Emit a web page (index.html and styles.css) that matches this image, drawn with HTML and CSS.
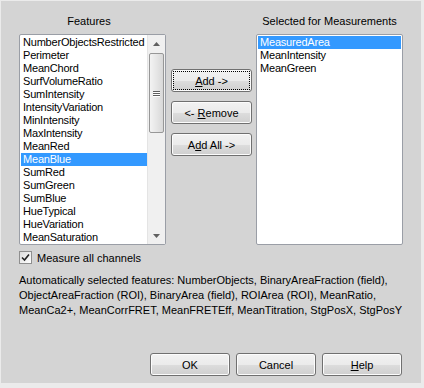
FILE: index.html
```html
<!DOCTYPE html>
<html lang="en">
<head>
    <meta charset="UTF-8">
    <title>Select Features</title>
    <link rel="stylesheet" href="styles.css">
</head>
<body>
    <div class="dialog">
        <div class="lists">
            <div class="column">
                <div class="caption caption-left">Features</div>
                <div class="listbox">
                    <ul class="items">
                        <li>NumberObjectsRestricted</li>
                        <li>Perimeter</li>
                        <li>MeanChord</li>
                        <li>SurfVolumeRatio</li>
                        <li>SumIntensity</li>
                        <li>IntensityVariation</li>
                        <li>MinIntensity</li>
                        <li>MaxIntensity</li>
                        <li>MeanRed</li>
                        <li class="selected">MeanBlue</li>
                        <li>SumRed</li>
                        <li>SumGreen</li>
                        <li>SumBlue</li>
                        <li>HueTypical</li>
                        <li>HueVariation</li>
                        <li>MeanSaturation</li>
                    </ul>
                    <div class="scrollbar">
                        <div class="arrow">
                            <svg width="7" height="4" viewBox="0 0 7 4"><path d="M0 4 L3.5 0 L7 4 Z" fill="#606060"/></svg>
                        </div>
                        <div class="track">
                            <div class="thumb">
                                <span class="grip"></span>
                                <span class="grip"></span>
                                <span class="grip"></span>
                            </div>
                        </div>
                        <div class="arrow">
                            <svg width="7" height="4" viewBox="0 0 7 4"><path d="M0 0 L3.5 4 L7 0 Z" fill="#606060"/></svg>
                        </div>
                    </div>
                </div>
            </div>

            <div class="actions">
                <button class="btn focused"><span><u>A</u>dd -&gt;</span></button>
                <button class="btn"><span>&lt;- <u>R</u>emove</span></button>
                <button class="btn"><span>A<u>d</u>d All -&gt;</span></button>
            </div>

            <div class="column">
                <div class="caption">Selected for Measurements</div>
                <div class="listbox">
                    <ul class="items">
                        <li class="selected">MeasuredArea</li>
                        <li>MeanIntensity</li>
                        <li>MeanGreen</li>
                    </ul>
                </div>
            </div>
        </div>

        <label class="check">
            <span class="box">
                <svg width="9" height="9" viewBox="0 0 9 9"><path d="M1 4.5 L3.5 7 L8 1.5" fill="none" stroke="#222" stroke-width="1.6"/></svg>
            </span>
            Measure all channels
        </label>

        <p class="auto">Automatically selected features: NumberObjects, BinaryAreaFraction (field),<br>ObjectAreaFraction (ROI), BinaryArea (field), ROIArea (ROI), MeanRatio,<br>MeanCa2+, MeanCorrFRET, MeanFRETEff, MeanTitration, StgPosX, StgPosY</p>

        <div class="footer">
            <button class="btn">OK</button>
            <button class="btn">Cancel</button>
            <button class="btn"><span><u>H</u>elp</span></button>
        </div>
    </div>
</body>
</html>
```

FILE: styles.css
```css
html, body {
    margin: 0;
    height: 100%;
}
body {
    background-color: #ebebeb;
    font-family: "Liberation Sans", Arial, sans-serif;
    font-size: 11px;
    color: #000;
}
.dialog {
    box-sizing: border-box;
    width: 420px;
    height: 382px;
    margin: 1px 0 0 1px;
    padding: 14px 0 0 18px;
    background-color: #d4d4d4;
    display: flex;
    flex-direction: column;
}
.lists {
    display: flex;
    align-items: flex-start;
}
.column {
    display: flex;
    flex-direction: column;
    width: 147px;
}
.caption {
    height: 13px;
    line-height: 13px;
    margin-bottom: 6px;
    text-align: center;
}
.caption-left {
    padding-right: 7px;
}
.listbox {
    box-sizing: border-box;
    height: 211px;
    border: 1px solid #9a9ea6;
    border-radius: 2px;
    background-color: #fff;
    padding: 1px;
    display: flex;
}
.items {
    list-style: none;
    margin: 0;
    padding: 0;
    flex: 1;
    overflow: hidden;
}
.items li {
    height: 13px;
    line-height: 13px;
    padding-left: 2px;
    white-space: nowrap;
    letter-spacing: -0.2px;
}
.items li.selected {
    background-color: #3399ff;
    color: #fff;
}
.scrollbar {
    width: 17px;
    margin: -1px -1px -1px 0;
    background-color: #f0f0f0;
    border-left: 1px solid #e4e4e4;
    display: flex;
    flex-direction: column;
}
.arrow {
    height: 17px;
    display: flex;
    align-items: center;
    justify-content: center;
}
.track {
    flex: 1;
    padding-top: 1px;
}
.thumb {
    box-sizing: border-box;
    height: 80px;
    margin: 0 1px;
    border: 1px solid #979797;
    border-radius: 2px;
    background: linear-gradient(to right, #f3f3f3, #e6e6e6 50%, #d8d8d8);
    display: flex;
    flex-direction: column;
    justify-content: center;
    align-items: center;
    gap: 1px;
}
.grip {
    width: 7px;
    height: 1px;
    background-color: #5e5e5e;
    box-shadow: 0 1px 0 #fff;
}
.actions {
    display: flex;
    flex-direction: column;
    gap: 9px;
    margin: 54px 4px 0 5px;
}
.btn {
    box-sizing: border-box;
    width: 81px;
    height: 23px;
    padding: 2px;
    border: 1px solid #707070;
    border-radius: 3px;
    background: linear-gradient(#f2f2f2, #ebebeb 50%, #dddddd 51%, #cfcfcf);
    box-shadow: inset 0 0 0 1px #fcfcfc;
    font-family: inherit;
    font-size: 11px;
    color: #000;
}
.btn span {
    display: flex;
    align-items: center;
    justify-content: center;
    height: 100%;
    white-space: pre;
}
.btn.focused span {
    outline: 1px dotted #000;
}
.check {
    display: flex;
    align-items: center;
    gap: 5px;
    margin-top: 6px;
    height: 13px;
}
.box {
    box-sizing: border-box;
    width: 13px;
    height: 13px;
    border: 1px solid #8f8f8f;
    background: linear-gradient(135deg, #dcdcdc, #fff);
    display: flex;
    align-items: center;
    justify-content: center;
}
.auto {
    margin: 9px 0 0 0;
    line-height: 15px;
}
.footer {
    margin-top: auto;
    margin-bottom: 7px;
    padding-right: 19px;
    display: flex;
    justify-content: flex-end;
    gap: 6px;
}
.footer .btn {
    width: 80px;
}
```
